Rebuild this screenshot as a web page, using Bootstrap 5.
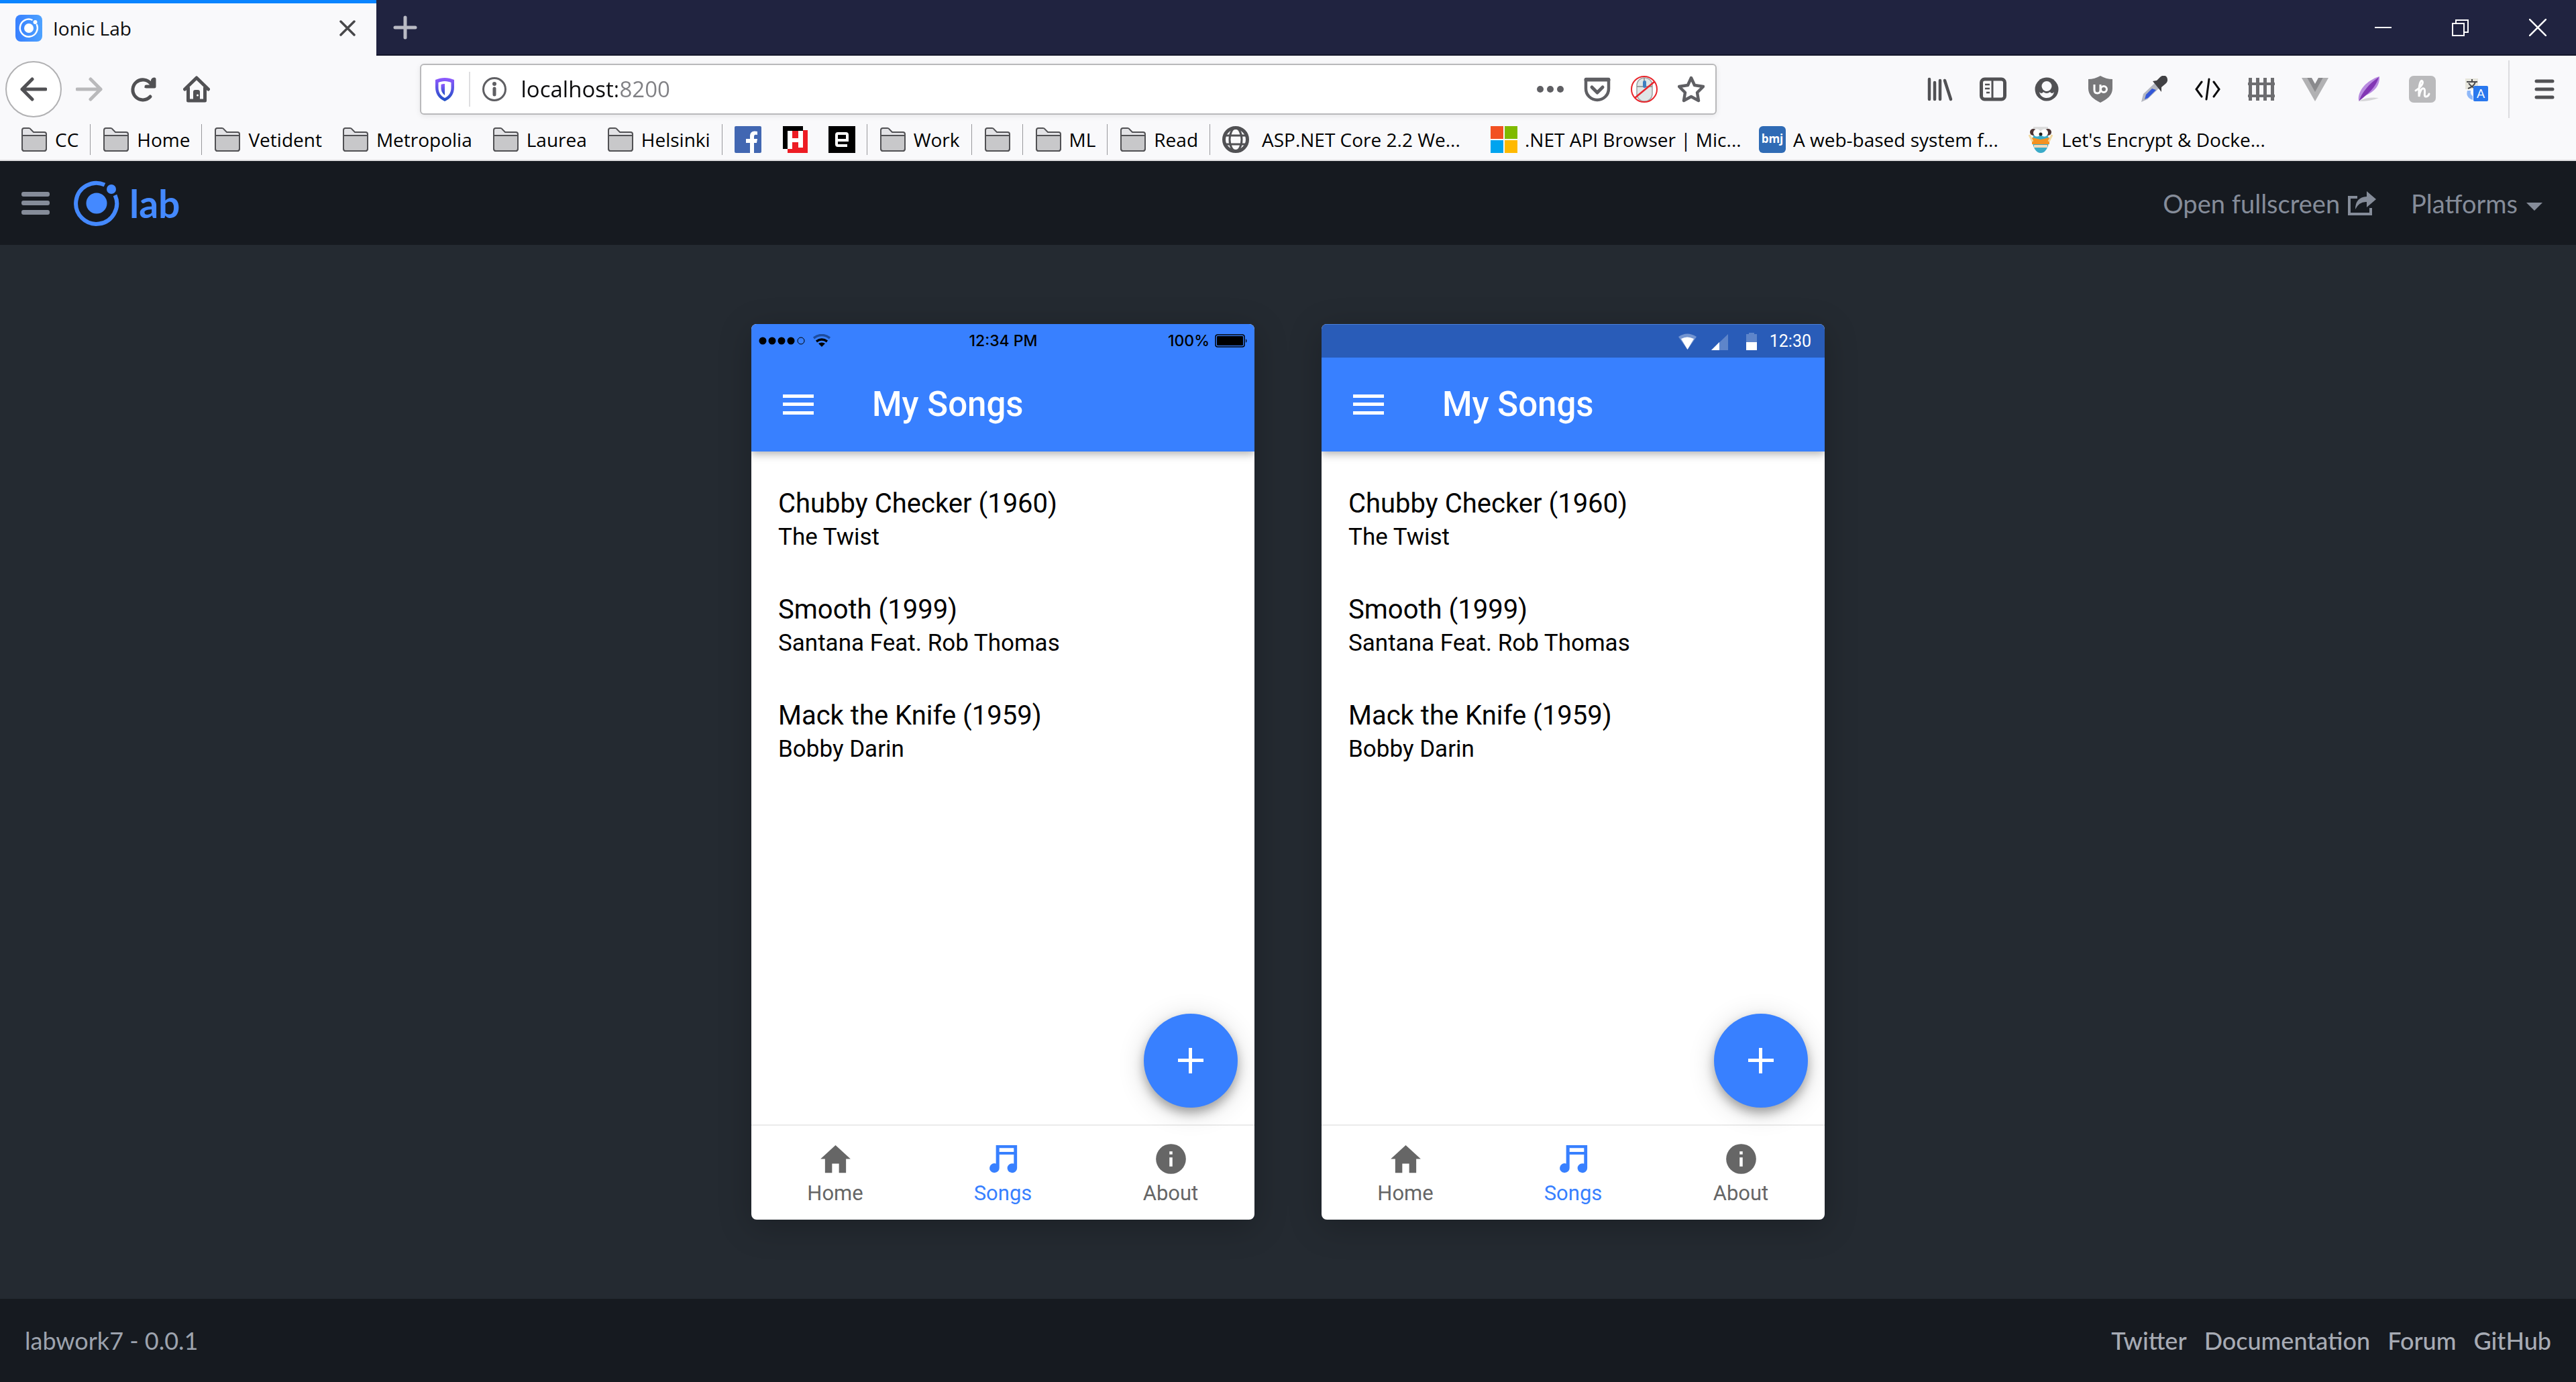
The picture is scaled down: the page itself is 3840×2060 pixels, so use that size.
<!DOCTYPE html>
<html lang="en">
<head>
<meta charset="utf-8">
<meta name="viewport" content="width=device-width, initial-scale=1">
<title>Ionic Lab</title>
<link href="https://cdn.jsdelivr.net/npm/bootstrap@5.3.0/dist/css/bootstrap.min.css" rel="stylesheet">
<style>
:root{--chrome:#f9f9fb;--ink:#0c0c0d;--icon:#515154;--ionic:#3880ff;--bar:#161a20;--stage:#242a31;}
body{font-family:"Open Sans","Noto Sans",sans-serif;background:var(--stage);color:var(--ink);min-height:100vh;}
button{border:0;background:none;padding:0;color:inherit;}
a{color:inherit;text-decoration:none;}
svg{display:block;flex:none;}
.i40{width:40px;height:40px;}
/* title bar */
.titlebar{height:83px;background:#202340;border-bottom:2px solid #15172c;}
.tab-active{width:561px;height:83px;background:var(--chrome);border-top:5px solid #0a84ff;padding:0 31px 5px 23px;font-size:28px;line-height:40px;}
.new-tab{color:#b9bac4;padding-left:25px;}
.win-controls{gap:90px;padding-right:44px;color:#fff;}
/* navigation bar */
.navrow{height:100px;background:var(--chrome);padding:0 32px 0 8px;color:var(--icon);}
.back-btn{width:84px;height:84px;border:2px solid #b1b1b3;border-radius:50%;background:#fff;margin-right:21px;}
.nav-btns{gap:40px;}
.urlbar{width:1933px;height:76px;background:#fff;border:2px solid #b9b9bb;border-radius:6px;box-shadow:0 2px 8px rgba(0,0,0,.08);padding:0 16px 0 15px;}
.url-rule{width:2px;height:52px;background:#dedee0;}
.url-input{border:0;outline:0;padding:0;margin-left:20px;font-size:33px;line-height:48px;color:#000;background:linear-gradient(90deg,#0c0c0d 143px,#808084 143px);-webkit-background-clip:text;background-clip:text;-webkit-text-fill-color:transparent;}
.url-actions{gap:30px;}
.ext-icons{gap:40px;}
.menu-rule{width:2px;height:86px;background:#dcdce0;margin:0 37px 0 28px;}
/* bookmarks */
.bookmarks{height:57px;background:var(--chrome);border-bottom:2px solid #dedee0;padding:0 0 5px 16px;font-size:28px;line-height:40px;color:#000;white-space:nowrap;}
.bm{gap:11px;padding:0 15px;}
.bm-page{width:400px;}
.bm-rule{width:1px;height:46px;background:#98989c;margin:0 3px 0 2px;}
/* lab header and footer */
.lab-header{height:125px;background:var(--bar);color:#858c99;font-family:Lato,sans-serif;font-size:38px;line-height:44px;padding:0 50px 0 32px;}
.lab-name{font-size:57px;line-height:60px;font-weight:700;color:#4489ff;gap:15px;}
.lab-menu{margin-left:52px;gap:13px;}
.lab-open{gap:12px;}
.lab-footer{height:124px;background:var(--bar);color:#9da3ae;font-family:Lato,sans-serif;font-size:36px;line-height:44px;padding:0 37px;}
.lab-links{gap:26px;font-weight:500;color:#a7abb4;}
/* phones */
.stage{gap:100px;padding:118px 0;background:var(--stage);}
.phone{width:750px;height:1335px;background:#fff;border-radius:8px;overflow:hidden;font-family:Roboto,sans-serif;color:#000;box-shadow:0 10px 50px rgba(0,0,0,.22);}
.status-bar{height:50px;background:var(--ionic);}
.status-ios{padding:0 10px 0 11px;font:500 23px/28px Inter,sans-serif;}
.status-md{background:#295cb8;color:#fff;font-size:25px;line-height:28px;padding:0 20px;gap:18px;border-top:1px solid #4a7fd8;}
.app-bar{height:140px;background:var(--ionic);color:#fff;padding-left:47px;gap:87px;box-shadow:0 4px 12px rgba(0,0,0,.3);clip-path:inset(0 0 -24px 0);z-index:1;}
.app-title{font-size:51px;line-height:60px;font-weight:500;margin:0;}
.songs{padding:54px 40px 0;gap:62px;}
.song-name{font-size:40px;line-height:48px;font-weight:400;margin:0 0 4px;}
.song-by{font-size:35px;line-height:44px;margin:0;}
.fab-btn{right:25px;bottom:25px;width:140px;height:140px;border-radius:50%;background:var(--ionic);color:#fff;box-shadow:0 8px 15px rgba(0,0,0,.3),0 6px 40px rgba(0,0,0,.16);}
.tabs{height:142px;border-top:2px solid #ebebeb;color:#666;font-size:31px;line-height:36px;padding-top:22px;}
.tabs .on{color:var(--ionic);}
.tabs svg{width:55px;height:55px;margin-bottom:6px;}
</style>
</head>
<body class="d-flex flex-column">
<svg width="0" height="0" class="position-absolute" aria-hidden="true">
  <symbol id="folder" viewBox="0 0 40 40"><path d="M2 33V6q0-3 3-3h7q2 0 3 2l4 4h16q3 0 3 3v21q0 4-3 4H5q-3 0-3-4z" fill="#e3e3e6" stroke="#515154" stroke-width="2"/><path d="M2 14h36v19q0 4-3 4H5q-3 0-3-4z" fill="#c8c8ca" stroke="#515154" stroke-width="2"/></symbol>
  <symbol id="bars" viewBox="0 0 46 30"><path d="M0 0h46v5H0zM0 12h46v5H0zM0 25h46v5H0z" fill="currentColor"/></symbol>
  <symbol id="t-home" viewBox="0 0 512 512"><path fill="currentColor" d="M208 448V320h96v128h97.6V256H464L256 64 48 256h62.4v192z"/></symbol>
  <symbol id="t-music" viewBox="0 0 512 512"><path fill="currentColor" d="M155 64h293v320a68 65 0 1 1-45-62V196H202v187a68 65 0 1 1-47-62zM202 104v55h201v-55z" fill-rule="evenodd"/></symbol>
  <symbol id="t-info" viewBox="0 0 512 512"><path fill="currentColor" fill-rule="evenodd" d="M256 48a208 208 0 1 0 0 416 208 208 0 1 0 0-416zM235 235h42v125h-42zM235 152h42v42h-42z"/></symbol>
  <symbol id="plus" viewBox="0 0 38 38"><path d="M16 0h5v16h17v5H21v17h-5V21H0v-5h16z" fill="currentColor"/></symbol>
</svg>

<header>
  <div class="titlebar d-flex align-items-start">
    <div class="tab-active d-flex align-items-center">
      <svg class="i40" viewBox="0 0 40 40"><defs><linearGradient id="fg"><stop stop-color="#3880ff"/><stop offset="1" stop-color="#4da2ff"/></linearGradient></defs><rect width="40" height="40" rx="8" fill="url(#fg)"/><circle cx="20" cy="20" r="7" fill="#fff"/><path d="M25.500 8A13 13 0 1 0 31.500 14" fill="none" stroke="#fff" stroke-width="2.500"/><circle cx="29.500" cy="11" r="3" fill="#fff"/></svg>
      <span class="ms-3">Ionic Lab</span>
      <button class="ms-auto" aria-label="Close tab"><svg width="24" height="24" viewBox="0 0 24 24" stroke="#47474a" stroke-width="3.500" stroke-linecap="round"><path d="M2 2l20 20M22 2L2 22"/></svg></button>
    </div>
    <button class="new-tab align-self-center" aria-label="New tab"><svg width="36" height="36" viewBox="0 0 36 36" stroke="currentColor" stroke-width="5" stroke-linecap="round"><path d="M18 3v30M3 18h30"/></svg></button>
    <div class="win-controls d-flex align-self-center ms-auto">
      <button aria-label="Minimize"><svg width="25" height="26" viewBox="0 0 25 26"><path d="M0 12h25v2H0z" fill="currentColor"/></svg></button>
      <button aria-label="Restore"><svg width="25" height="26" viewBox="0 0 25 26" fill="none" stroke="currentColor" stroke-width="2"><path d="M1 7h17v18H1zM6 7V2h18v18h-6"/></svg></button>
      <button aria-label="Close window"><svg width="26" height="26" viewBox="0 0 26 26" stroke="currentColor" stroke-width="2.500"><path d="M0 0l26 26M26 0L0 26"/></svg></button>
    </div>
  </div>

  <nav class="navrow d-flex align-items-center" aria-label="Browser">
    <button class="back-btn d-flex align-items-center justify-content-center" aria-label="Back"><svg class="i40" viewBox="0 0 40 40" fill="none" stroke="currentColor" stroke-width="5" stroke-linecap="round" stroke-linejoin="round"><path d="M18 5L3 20l15 15M3 20h35"/></svg></button>
    <div class="nav-btns d-flex">
      <button aria-label="Forward"><svg class="i40" viewBox="0 0 40 40" fill="none" stroke="#b9b9bb" stroke-width="5" stroke-linecap="round" stroke-linejoin="round"><path d="M22 5l15 15-15 15M37 20H2"/></svg></button>
      <button aria-label="Reload"><svg class="i40" viewBox="0 0 40 40" fill="none" stroke="currentColor" stroke-width="5" stroke-linecap="round"><path d="M31 31A15 15 0 1 1 32 12"/><path d="M37 3v15H22l4-4h6V6q2-4 5-3z" fill="currentColor" stroke="none"/><path d="M37 5v11H25" stroke-linejoin="round"/></svg></button>
      <button aria-label="Home"><svg class="i40" viewBox="0 0 40 40" fill="none" stroke="currentColor" stroke-width="5" stroke-linecap="round" stroke-linejoin="round"><path d="M2.500 20L20 3l17.500 17M7.500 18v19h25V18"/><path d="M15 37V24q0-3 3-3h4q3 0 3 3v13z" fill="currentColor" stroke="none"/><circle cx="21.500" cy="29" r="1.500" fill="#fff" stroke="none"/></svg></button>
    </div>
    <form class="urlbar d-flex align-items-center mx-auto">
      <svg class="i40" viewBox="0 0 40 40"><defs><linearGradient id="sg" x2="0" y2="1"><stop stop-color="#9059ff"/><stop offset="1" stop-color="#1d4fc4"/></linearGradient></defs><path d="M20 3c5 0 9 1 14 3v11c0 10-5 17-14 21C11 34 6 27 6 17V6c5-2 9-3 14-3z" fill="url(#sg)"/><path d="M20 8c4 0 7 1 9.500 2v8c0 6-3 12-9.500 15-6.500-3-9.500-9-9.500-15v-8C13 9 16 8 20 8z" fill="#fff"/><path d="M20 12v17c-4-3-5.500-7-5.500-11v-5c2-1 3-1 5.500-1z" fill="url(#sg)"/></svg>
      <span class="url-rule mx-3"></span>
      <svg class="i40" viewBox="0 0 40 40"><circle cx="20" cy="20" r="16.500" fill="none" stroke="#5f5f63" stroke-width="3"/><circle cx="20" cy="12" r="3" fill="#5f5f63"/><path d="M20 19v9" stroke="#5f5f63" stroke-width="5" stroke-linecap="round"/></svg>
      <input class="url-input flex-grow-1" type="text" value="localhost:8200" aria-label="Address">
      <div class="url-actions d-flex">
        <button type="button" aria-label="Page actions"><svg class="i40" viewBox="0 0 40 40" fill="#5f5f63"><circle cx="5" cy="20" r="5"/><circle cx="20" cy="20" r="5"/><circle cx="35" cy="20" r="5"/></svg></button>
        <button type="button" aria-label="Pocket"><svg class="i40" viewBox="0 0 40 40" fill="none" stroke="#5f5f63" stroke-width="4.500" stroke-linecap="round" stroke-linejoin="round"><path d="M3 5h34v14c0 10-8 17-17 17S3 29 3 19z"/><path d="M3 6h34" stroke-width="5"/><path d="M12 17l8 8 8-8" stroke-width="5"/></svg></button>
        <button type="button" aria-label="Mouse gestures"><svg class="i40" viewBox="0 0 40 40" fill="none"><rect x="9" y="3" width="23" height="35" rx="11" fill="#dfe6e6" stroke="#a0a3a6" stroke-width="1.500"/><path d="M9 16h23M20 3v5" stroke="#888" stroke-width="1.500"/><rect x="18" y="7" width="5" height="11" rx="2.500" fill="#3f7fbf"/><circle cx="20" cy="20" r="19" stroke="#e8262c" stroke-width="2"/><path d="M6 33L35 9" stroke="#e8262c" stroke-width="2.500"/></svg></button>
        <button type="button" aria-label="Bookmark this page"><svg class="i40" viewBox="0 0 40 40" fill="none" stroke="#5f5f63" stroke-width="4.500" stroke-linejoin="round"><path d="M20 3l5 11 13 2-9 9 2 12-11-6-11 6 2-12-9-9 13-2z"/></svg></button>
      </div>
    </form>
    <div class="ext-icons d-flex align-items-center">
      <button aria-label="Library"><svg class="i40" viewBox="0 0 40 40" stroke="currentColor" stroke-width="4.500" stroke-linecap="round"><path d="M5 5v30M13 10v25M21 7v28M28 7l9 28"/></svg></button>
      <button aria-label="Sidebars"><svg class="i40" viewBox="0 0 40 40" fill="none" stroke="currentColor"><rect x="2.500" y="5" width="35" height="30" rx="5" stroke-width="5"/><path d="M19 5v30" stroke-width="3"/><path d="M8 13h7M8 19h7M10 25h5" stroke-width="2.500"/></svg></button>
      <button aria-label="Account"><svg class="i40" viewBox="0 0 40 40"><circle cx="20" cy="20" r="17.500" fill="currentColor"/><circle cx="20" cy="15.500" r="7.500" fill="#f9f9fb"/><path d="M9 24c2 3 5 2 6 0q5 4 10 0c1 2 4 3 6 0-1 6-6 9-11 9S10 30 9 24z" fill="#f9f9fb"/></svg></button>
      <button aria-label="uBlock Origin"><svg class="i40" viewBox="0 0 40 40"><path d="M20 0c5 3 12 5 18 5v14c0 10-8 16-18 21C10 35 2 29 2 19V5c6 0 13-2 18-5z" fill="#78787a"/><path d="M11 13v8q0 5 4.500 5t4.500-5v-8" fill="none" stroke="#fff" stroke-width="3"/><circle cx="25" cy="20" r="4.500" fill="none" stroke="#fff" stroke-width="3"/></svg></button>
      <button aria-label="Colour picker"><svg class="i40" viewBox="0 0 40 40"><path d="M1 39l3-12L22 10l7 7-19 18z" fill="#b4b7c0"/><path d="M6 35l2-7 9-9 6 2-12 12z" fill="#3458d8"/><path d="M18 8l6-1 5-5q6-5 10 0 3 6-2 10l-6 5v7z" fill="#414144"/></svg></button>
      <button aria-label="Developer tools"><svg class="i40" viewBox="0 0 40 40" fill="none" stroke="#0c0c0d" stroke-width="3" stroke-linecap="round"><path d="M11 9L3 20l8 11M29 9l8 11-8 11M22 5l-4 30"/></svg></button>
      <button aria-label="Fence"><svg class="i40" viewBox="0 0 40 40" stroke="#6d6d70"><path d="M3.500 3v34M14.500 3v34M25.500 3v34M36.500 3v34" stroke-width="5"/><path d="M0 12h40M0 30h40" stroke-width="4"/></svg></button>
      <button aria-label="Vue"><svg class="i40" viewBox="0 0 40 40"><path d="M0 3h8l12 20L32 3h8L20 38z" fill="#b1b1b3"/><path d="M8 3h7l5 9 5-9h7L20 24z" fill="#8a8a8d"/></svg></button>
      <button aria-label="Feather"><svg class="i40" viewBox="0 0 40 40"><path d="M5 37C3 22 18 6 36 1c1 17-12 26-28 31z" fill="#b98be0"/><path d="M5 38C10 25 20 12 35 2 30 18 20 26 5 38z" fill="#8236b4"/><path d="M5 38q12-7 30-5-12 5-30 5z" fill="#d5d5d7"/></svg></button>
      <button aria-label="Honey"><svg class="i40" viewBox="0 0 40 40"><rect width="40" height="40" rx="7" fill="#bababc"/><path d="M10 22c7-4 12-11 10-14s-6 4-5 23c1-8 4-13 7-12 4 1-1 12 3 12 2 0 4-1 5-4" fill="none" stroke="#fff" stroke-width="3" stroke-linecap="round"/></svg></button>
      <button aria-label="Translate"><svg class="i40" viewBox="0 0 40 40"><path d="M4 4h19v16H4z" fill="#e7e6dc"/><path d="M6 9h16M14 5v4M8 19q9-3 11-10M9 11q4 6 11 8" fill="none" stroke="#48484b" stroke-width="2"/><path d="M7 22q-3 10 8 14v-6q-4-2-3-8z" fill="#8fb8f8"/><rect x="16" y="15" width="22" height="23" rx="2" fill="#2a78ee"/><text x="27" y="33" font-family="Lato" font-size="18" fill="#fff" text-anchor="middle">A</text></svg></button>
    </div>
    <span class="menu-rule"></span>
    <button aria-label="Menu"><svg width="30" height="30" viewBox="0 0 30 30" stroke="currentColor" stroke-width="5" stroke-linecap="round"><path d="M3 3h24M3 15h24M3 27h24"/></svg></button>
  </nav>

  <nav class="bookmarks d-flex align-items-center" aria-label="Bookmarks">
    <a href="#" class="bm d-flex align-items-center"><svg class="i40"><use href="#folder"/></svg>CC</a><span class="bm-rule"></span>
    <a href="#" class="bm d-flex align-items-center"><svg class="i40"><use href="#folder"/></svg>Home</a><span class="bm-rule"></span>
    <a href="#" class="bm d-flex align-items-center"><svg class="i40"><use href="#folder"/></svg>Vetident</a>
    <a href="#" class="bm d-flex align-items-center"><svg class="i40"><use href="#folder"/></svg>Metropolia</a>
    <a href="#" class="bm d-flex align-items-center"><svg class="i40"><use href="#folder"/></svg>Laurea</a>
    <a href="#" class="bm d-flex align-items-center"><svg class="i40"><use href="#folder"/></svg>Helsinki</a><span class="bm-rule"></span>
    <a href="#" class="bm d-flex align-items-center" aria-label="Facebook"><svg class="i40" viewBox="0 0 40 40"><rect width="40" height="40" rx="2" fill="#4267b2"/><path d="M23 40V25h-6v-6h6v-4c0-6 4-9 11-7v5c-4-1-5 0-5 3v3h5l-1 6h-4v15z" fill="#fff"/></svg></a>
    <a href="#" class="bm d-flex align-items-center" aria-label="Hacker site"><svg class="i40" viewBox="0 0 40 40"><path d="M2 0h30v34H2z" fill="#000"/><path d="M9 6h30v34H9z" fill="#ed1c24"/><path d="M2 0h30v7H9v27H2z" fill="#000"/><path d="M9 7h7v11h9V7h7v25h-7V24h-9v10H9z" fill="#fff"/></svg></a>
    <a href="#" class="bm d-flex align-items-center" aria-label="E site"><svg class="i40" viewBox="0 0 40 40"><path d="M0 0h40v40H0z"/><path d="M28 29H14q-2 0-2-2V13q0-2 2-2h12q2 0 2 2v8H13" fill="none" stroke="#fff" stroke-width="4"/></svg></a><span class="bm-rule"></span>
    <a href="#" class="bm d-flex align-items-center"><svg class="i40"><use href="#folder"/></svg>Work</a><span class="bm-rule"></span>
    <a href="#" class="bm d-flex align-items-center" aria-label="Folder"><svg class="i40"><use href="#folder"/></svg></a><span class="bm-rule"></span>
    <a href="#" class="bm d-flex align-items-center"><svg class="i40"><use href="#folder"/></svg>ML</a><span class="bm-rule"></span>
    <a href="#" class="bm d-flex align-items-center"><svg class="i40"><use href="#folder"/></svg>Read</a><span class="bm-rule"></span>
    <a href="#" class="bm bm-page d-flex align-items-center"><svg class="i40 me-2" viewBox="0 0 40 40" fill="none" stroke="#515154"><circle cx="20" cy="20" r="17.500" stroke-width="5"/><ellipse cx="20" cy="20" rx="9" ry="17" stroke-width="3"/><path d="M3 14h34M3 27h34" stroke-width="3"/></svg>ASP.NET Core 2.2 We...</a>
    <a href="#" class="bm bm-page d-flex align-items-center"><svg class="i40" viewBox="0 0 40 40"><path d="M0 0h19v19H0z" fill="#f25022"/><path d="M21 0h19v19H21z" fill="#7fba00"/><path d="M0 21h19v19H0z" fill="#00a4ef"/><path d="M21 21h19v19H21z" fill="#ffb900"/></svg>.NET API Browser | Mic...</a>
    <a href="#" class="bm bm-page d-flex align-items-center"><svg class="i40" viewBox="0 0 40 40"><rect width="40" height="40" rx="6" fill="#2f6bb5"/><text x="20" y="25" font-family="Open Sans" font-size="17" font-weight="700" fill="#fff" text-anchor="middle">bmj</text></svg>A web-based system f...</a>
    <a href="#" class="bm bm-page d-flex align-items-center"><svg class="i40" viewBox="0 0 40 40"><ellipse cx="20" cy="22" rx="12" ry="18" fill="#3aabc9"/><path d="M9 1h22v8H9z" fill="#dcdcdc"/><circle cx="9" cy="9" r="5" fill="#4b3434"/><circle cx="31" cy="9" r="5" fill="#4b3434"/><circle cx="14.500" cy="10" r="5.500" fill="#fff"/><circle cx="25.500" cy="10" r="5.500" fill="#fff"/><circle cx="20" cy="12" r="2.500" fill="#222"/><path d="M7 17l13 3 13-3v10H7z" fill="#f39221"/><path d="M10 28h20v4H10z" fill="#f3d9b8"/><path d="M3 13l5 10M37 13l-5 10" stroke="#f1d9a0" stroke-width="3"/></svg>Let's Encrypt &amp; Docke...</a>
  </nav>
</header>

<div class="lab-header d-flex align-items-center">
  <button aria-label="Toggle sidebar"><svg width="42" height="34" viewBox="0 0 42 34" fill="currentColor"><rect width="42" height="7" rx="3"/><rect y="13" width="42" height="7" rx="3"/><rect y="27" width="42" height="7" rx="3"/></svg></button>
  <a href="#" class="lab-name d-flex align-items-center ms-3 ps-3">
    <svg class="ms-1" width="68" height="68" viewBox="0 0 68 68"><circle cx="34" cy="34" r="15.500" fill="currentColor"/><path d="M46 6.500A30.500 30.500 0 1 0 61.500 22" fill="none" stroke="currentColor" stroke-width="6"/><circle cx="56" cy="13" r="7" fill="currentColor"/></svg>lab</a>
  <div class="d-flex align-items-center ms-auto">
    <a href="#" class="lab-open d-flex align-items-center">Open fullscreen<svg width="42" height="36" viewBox="0 0 42 36"><path d="M14 9H2v25h32v-9" fill="none" stroke="currentColor" stroke-width="4"/><path d="M11 27q0-18 17-19V0l14 12-14 12v-8q-11-1-17 11z" fill="currentColor"/></svg></a>
    <button class="lab-menu d-flex align-items-center">Platforms<svg class="mt-2" width="24" height="14" viewBox="0 0 24 14"><path d="M0 2h24L12 14z" fill="currentColor"/></svg></button>
  </div>
</div>

<main class="stage flex-grow-1 d-flex justify-content-center align-items-center">
  <section class="phone d-flex flex-column" aria-label="iOS preview">
    <div class="status-bar status-ios row g-0 align-items-center">
      <div class="col d-flex align-items-center">
        <svg width="108" height="20" viewBox="0 0 108 20"><circle cx="6" cy="10" r="5.500"/><circle cx="20" cy="10" r="5.500"/><circle cx="34" cy="10" r="5.500"/><circle cx="48" cy="10" r="5.500"/><circle cx="63" cy="10" r="5" fill="none" stroke="#000"/><path d="M82 6q12-9 24 0" fill="none" stroke="#1d4c9e" stroke-width="3.500"/><path d="M86 11q8-6 16 0" fill="none" stroke="#000" stroke-width="3.500"/><path d="M89 14q5-3 10 0l-5 5z"/></svg>
      </div>
      <div class="col-auto">12:34 PM</div>
      <div class="col d-flex align-items-center justify-content-end">100%<svg class="ms-2" width="49" height="20" viewBox="0 0 49 20"><rect x="1" y="1" width="43" height="18" rx="3" fill="none" stroke="#000" stroke-width="1.500"/><rect x="3" y="3" width="39" height="14" rx="1"/><path d="M46 7q3 3 0 6z"/></svg></div>
    </div>
    <div class="app-bar d-flex align-items-center position-relative"><button aria-label="Menu"><svg width="46" height="30"><use href="#bars"/></svg></button><h1 class="app-title">My Songs</h1></div>
    <div class="songs flex-grow-1 d-flex flex-column position-relative">
      <article><h2 class="song-name">Chubby Checker (1960)</h2><p class="song-by">The Twist</p></article>
      <article><h2 class="song-name">Smooth (1999)</h2><p class="song-by">Santana Feat. Rob Thomas</p></article>
      <article><h2 class="song-name">Mack the Knife (1959)</h2><p class="song-by">Bobby Darin</p></article>
      <button class="fab-btn position-absolute d-flex align-items-center justify-content-center" aria-label="Add song"><svg width="38" height="38"><use href="#plus"/></svg></button>
    </div>
    <nav class="tabs row g-0 text-center">
      <a href="#" class="col d-flex flex-column align-items-center"><svg><use href="#t-home"/></svg>Home</a>
      <a href="#" class="col d-flex flex-column align-items-center on"><svg><use href="#t-music"/></svg>Songs</a>
      <a href="#" class="col d-flex flex-column align-items-center"><svg><use href="#t-info"/></svg>About</a>
    </nav>
  </section>

  <section class="phone d-flex flex-column" aria-label="Android preview">
    <div class="status-bar status-md d-flex align-items-center justify-content-end">
      <svg width="118" height="26" viewBox="0 0 118 26" fill="#fff"><path d="M0 6q13-9 27 0L13.500 25z" opacity=".35"/><path d="M4 9q9-5 19 0l-9.500 16z"/><path d="M74 2v24H49z" opacity=".25"/><path d="M61 14v12H49z"/><path d="M101 2h4V0h8v2h4v24h-16z" opacity=".25"/><path d="M101 14h16v12h-16z"/></svg>
      <span>12:30</span>
    </div>
    <div class="app-bar d-flex align-items-center position-relative"><button aria-label="Menu"><svg width="46" height="30"><use href="#bars"/></svg></button><h1 class="app-title">My Songs</h1></div>
    <div class="songs flex-grow-1 d-flex flex-column position-relative">
      <article><h2 class="song-name">Chubby Checker (1960)</h2><p class="song-by">The Twist</p></article>
      <article><h2 class="song-name">Smooth (1999)</h2><p class="song-by">Santana Feat. Rob Thomas</p></article>
      <article><h2 class="song-name">Mack the Knife (1959)</h2><p class="song-by">Bobby Darin</p></article>
      <button class="fab-btn position-absolute d-flex align-items-center justify-content-center" aria-label="Add song"><svg width="38" height="38"><use href="#plus"/></svg></button>
    </div>
    <nav class="tabs row g-0 text-center">
      <a href="#" class="col d-flex flex-column align-items-center"><svg><use href="#t-home"/></svg>Home</a>
      <a href="#" class="col d-flex flex-column align-items-center on"><svg><use href="#t-music"/></svg>Songs</a>
      <a href="#" class="col d-flex flex-column align-items-center"><svg><use href="#t-info"/></svg>About</a>
    </nav>
  </section>
</main>

<footer class="lab-footer d-flex align-items-center justify-content-between">
  <span>labwork7 - 0.0.1</span>
  <nav class="lab-links d-flex"><a href="#">Twitter</a><a href="#">Documentation</a><a href="#">Forum</a><a href="#">GitHub</a></nav>
</footer>
<script src="https://cdn.jsdelivr.net/npm/bootstrap@5.3.0/dist/js/bootstrap.bundle.min.js"></script>
</body>
</html>
